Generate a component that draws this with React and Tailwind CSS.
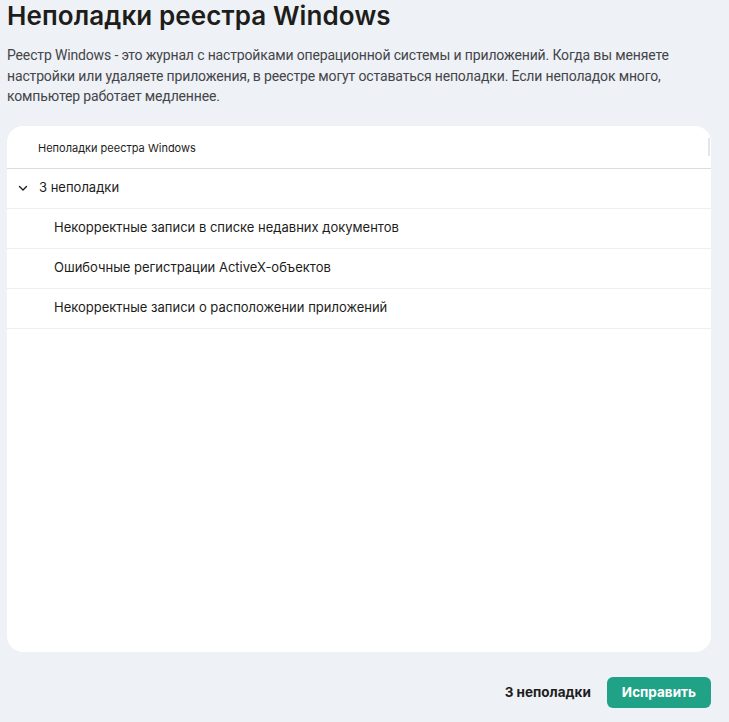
import React from "react";

const issues = [
  "Некорректные записи в списке недавних документов",
  "Ошибочные регистрации ActiveX-объектов",
  "Некорректные записи о расположении приложений",
];

function ChevronDown() {
  return (
    <svg width="12" height="12" viewBox="0 0 12 12" fill="none">
      <path d="M2.5 4.5L6 8L9.5 4.5" stroke="#1d1d1b" strokeWidth="1.4" strokeLinecap="round" strokeLinejoin="round" />
    </svg>
  );
}

export default function App() {
  return (
    <div
      className="h-[722px] w-[729px] overflow-hidden bg-[#eef1f6] pl-[7px] pr-[18px] flex flex-col text-[#1d1d1b]"
      style={{ fontFamily: "Inter, 'Noto Sans', sans-serif" }}
    >
      <h1 className="text-[26px] font-semibold leading-[32px] tracking-[0.1px]">
        Неполадки реестра Windows
      </h1>
      <p
        className="mt-[13px] text-[14px] leading-[20.5px] text-[#444549] tracking-[-0.15px]"
        style={{ fontFamily: "Roboto, 'Noto Sans', sans-serif" }}
      >
        Реестр Windows - это журнал с настройками операционной системы и приложений. Когда вы меняете
        настройки или удаляете приложения, в реестре могут оставаться неполадки. Если неполадок много,
        компьютер работает медленнее.
      </p>

      <div className="mt-[19px] h-[526px] bg-white rounded-[16px] relative overflow-hidden">
        <div className="h-[43px] flex items-center pl-[31px] pt-[3px] text-[11px] border-b border-[#d9dde3]">
          Неполадки реестра Windows
        </div>
        <div className="absolute right-[1px] top-[12px] w-[2px] h-[18px] bg-[#e3e5e8]" />
        <div className="h-[40px] flex items-center pl-[10px] gap-[10px] text-[13px] border-b border-[#eceef2]">
          <ChevronDown />
          <span>3 неполадки</span>
        </div>
        {issues.map((t) => (
          <div key={t} className="h-[40px] flex items-center pl-[47px] text-[13px] border-b border-[#eceef2]">
            {t}
          </div>
        ))}
      </div>

      <div className="flex-1 flex items-start justify-end pt-[25px] gap-[16px]">
        <span className="text-[13.5px] font-bold leading-[31px]">3 неполадки</span>
        <button className="h-[31px] px-[15px] rounded-[6px] bg-[#1fa286] text-white text-[13.5px] font-bold">
          Исправить
        </button>
      </div>
    </div>
  );
}
